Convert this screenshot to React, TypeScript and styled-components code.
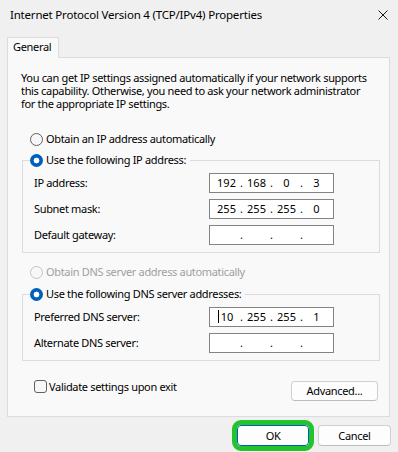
import React from 'react';
import styled, { createGlobalStyle } from 'styled-components';

const GlobalStyle = createGlobalStyle`
  html, body {
    margin: 0;
    padding: 0;
    background: #f0f0f0;
  }
  body {
    font-family: 'Noto Sans', 'Liberation Sans', sans-serif;
    font-size: 11px;
    letter-spacing: -0.33px;
    color: #000;
  }
`;

const Dialog = styled.div`
  width: 398px;
  height: 452px;
  background: #f0f0f0;
  display: flex;
  flex-direction: column;
  overflow: hidden;
`;

const TitleBar = styled.div`
  height: 30px;
  display: flex;
  align-items: center;
  justify-content: space-between;
  padding: 0 10px;
  box-sizing: border-box;
`;

const Title = styled.div`
  font-size: 11.5px;
  letter-spacing: -0.2px;
  line-height: 16px;
  white-space: nowrap;
`;

const CloseIcon = styled.svg`
  width: 10px;
  height: 10px;
`;

const TabStrip = styled.div`
  display: flex;
  padding-left: 7px;
  margin-top: 7px;
  position: relative;
  z-index: 1;
`;

const Tab = styled.div`
  height: 21px;
  box-sizing: border-box;
  padding: 0 7px 0 5px;
  border: 1px solid #dcdcdc;
  border-bottom: none;
  background: #f9f9f9;
  margin-bottom: -1px;
  line-height: 18px;
`;

const Panel = styled.div`
  margin: 0 8px 0 7px;
  border: 1px solid #dcdcdc;
  background: #f9f9f9;
  padding: 13px 9px 15px 14px;
`;

const Description = styled.p`
  margin: 0 0 0 -1px;
  line-height: 13px;
  white-space: nowrap;
`;

const RadioRow = styled.label<{ $disabled?: boolean }>`
  display: flex;
  align-items: center;
  height: 16px;
  line-height: 16px;
  padding-left: 8px;
  color: ${({ $disabled }) => ($disabled ? '#a0a0a0' : '#000')};
  white-space: nowrap;
`;

const RadioDot = styled.span<{ $checked?: boolean; $disabled?: boolean }>`
  width: 13px;
  height: 13px;
  box-sizing: border-box;
  border-radius: 50%;
  margin-right: 3px;
  flex: none;
  border: ${({ $checked, $disabled }) =>
    $checked ? 'none' : `1px solid ${$disabled ? '#c4c4c4' : '#606060'}`};
  background: ${({ $checked }) =>
    $checked
      ? 'radial-gradient(circle, #ffffff 0 2.6px, #005fb8 3.2px)'
      : '#f7f7f7'};
`;

const Group = styled.fieldset<{ $top: number }>`
  margin: ${({ $top }) => $top}px 0 0 0;
  padding: 5px 45px 7px 0;
  border: 1px solid #dcdcdc;
  min-width: 0;
`;

const Legend = styled.legend`
  margin-left: 7px;
  padding: 0 4px 0 0;
  line-height: 16px;
  height: 16px;
`;

const LegendRadio = styled(RadioRow)`
  padding-left: 0;
`;

const Fields = styled.div`
  display: grid;
  grid-template-columns: 1fr 125px;
  row-gap: 6px;
  align-items: center;
  padding-left: 11px;
`;

const FieldLabel = styled.span`
  line-height: 16px;
  white-space: nowrap;
`;

const IpBox = styled.div`
  height: 20px;
  box-sizing: border-box;
  border: 1px solid #838383;
  background: #fff;
  display: flex;
  align-items: center;
  padding-left: 6px;
  letter-spacing: 0;
`;

const Octet = styled.span`
  width: 21px;
  text-align: center;
  line-height: 16px;
`;

const Dot = styled.span`
  width: 9px;
  text-align: center;
  line-height: 16px;
`;

const Caret = styled.span`
  display: inline-block;
  width: 1px;
  height: 13px;
  background: #000;
  vertical-align: -2px;
  margin-left: -2px;
  margin-right: 2px;
`;

const Footer = styled.div`
  display: flex;
  justify-content: space-between;
  align-items: flex-start;
  margin-top: 17px;
  padding: 0 2px 0 12px;
`;

const CheckRow = styled.label`
  display: flex;
  align-items: center;
  height: 16px;
  white-space: nowrap;
`;

const CheckBox = styled.span`
  width: 13px;
  height: 13px;
  box-sizing: border-box;
  border: 1px solid #606060;
  border-radius: 3px;
  background: #f7f7f7;
  margin-right: 2px;
  flex: none;
`;

const Button = styled.button<{ $w: number; $default?: boolean; $highlight?: boolean }>`
  width: ${({ $w }) => $w}px;
  height: 21px;
  box-sizing: border-box;
  font-family: inherit;
  font-size: inherit;
  letter-spacing: inherit;
  color: #000;
  background: #fdfdfd;
  border: 1px solid ${({ $default }) => ($default ? '#005fb8' : '#d0d0d0')};
  border-bottom-color: ${({ $default }) => ($default ? '#005fb8' : '#bdbdbd')};
  border-radius: 4px;
  padding: 0;
  line-height: 18px;
  outline: ${({ $highlight }) => ($highlight ? '5px solid #22c32c' : 'none')};
  outline-offset: 0;
`;

const AdvancedButton = styled(Button)`
  margin-top: 3px;
  height: 20px;
`;

const ButtonBar = styled.div`
  display: flex;
  justify-content: flex-end;
  gap: 9px;
  margin-top: 8px;
  padding-right: 7px;
`;

type IpProps = { value?: string[]; caret?: boolean };

const IpField = ({ value, caret }: IpProps) => (
  <IpBox>
    {[0, 1, 2, 3].map((i) => (
      <React.Fragment key={i}>
        <Octet>
          {caret && i === 0 && <Caret />}
          {value ? value[i] : ''}
        </Octet>
        {i < 3 && <Dot>.</Dot>}
      </React.Fragment>
    ))}
  </IpBox>
);

export default function App() {
  return (
    <>
      <GlobalStyle />
      <Dialog>
        <TitleBar>
          <Title>Internet Protocol Version 4 (TCP/IPv4) Properties</Title>
          <CloseIcon viewBox="0 0 10 10">
            <path d="M0.5 0.5 L9.5 9.5 M9.5 0.5 L0.5 9.5" stroke="#1a1a1a" strokeWidth="1" fill="none" />
          </CloseIcon>
        </TitleBar>
        <TabStrip>
          <Tab>General</Tab>
        </TabStrip>
        <Panel>
          <Description>
            You can get IP settings assigned automatically if your network supports
            <br />
            this capability. Otherwise, you need to ask your network administrator
            <br />
            for the appropriate IP settings.
          </Description>

          <RadioRow style={{ marginTop: 21 }}>
            <RadioDot />
            Obtain an IP address automatically
          </RadioRow>

          <Group $top={5}>
            <Legend>
              <LegendRadio>
                <RadioDot $checked />
                Use the following IP address:
              </LegendRadio>
            </Legend>
            <Fields>
              <FieldLabel>IP address:</FieldLabel>
              <IpField value={['192', '168', '0', '3']} />
              <FieldLabel>Subnet mask:</FieldLabel>
              <IpField value={['255', '255', '255', '0']} />
              <FieldLabel>Default gateway:</FieldLabel>
              <IpField />
            </Fields>
          </Group>

          <RadioRow $disabled style={{ marginTop: 11 }}>
            <RadioDot $disabled />
            Obtain DNS server address automatically
          </RadioRow>

          <Group $top={6}>
            <Legend>
              <LegendRadio>
                <RadioDot $checked />
                Use the following DNS server addresses:
              </LegendRadio>
            </Legend>
            <Fields>
              <FieldLabel>Preferred DNS server:</FieldLabel>
              <IpField value={['10', '255', '255', '1']} caret />
              <FieldLabel>Alternate DNS server:</FieldLabel>
              <IpField />
            </Fields>
          </Group>

          <Footer>
            <CheckRow>
              <CheckBox />
              Validate settings upon exit
            </CheckRow>
            <AdvancedButton $w={87}>Advanced...</AdvancedButton>
          </Footer>
        </Panel>
        <ButtonBar>
          <Button $w={72} $default $highlight>
            OK
          </Button>
          <Button $w={73}>Cancel</Button>
        </ButtonBar>
      </Dialog>
    </>
  );
}
